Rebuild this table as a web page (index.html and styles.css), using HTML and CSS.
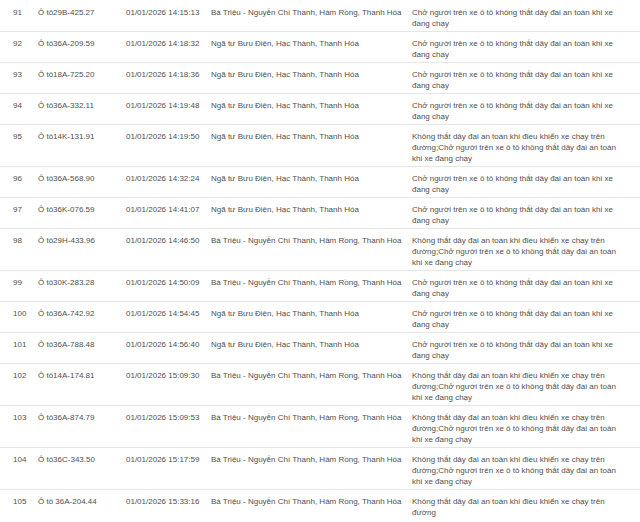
FILE: index.html
```html
<!DOCTYPE html>
<html lang="vi">
<head>
<meta charset="utf-8">
<title>Danh sách vi phạm</title>
<link rel="stylesheet" href="styles.css">
</head>
<body>
<table class="violations">
  <colgroup>
    <col class="c-no"><col class="c-plate"><col class="c-time"><col class="c-place"><col class="c-desc">
  </colgroup>
  <tbody>
    <tr><td>91</td><td>Ô tô29B-425.27</td><td>01/01/2026 14:15:13</td><td>Bà Triệu - Nguyễn Chí Thanh, Hàm Rồng, Thanh Hóa</td><td>Chở người trên xe ô tô không thắt dây đai an toàn khi xe đang chạy</td></tr>
    <tr><td>92</td><td>Ô tô36A-209.59</td><td>01/01/2026 14:18:32</td><td>Ngã tư Bưu Điện, Hạc Thành, Thanh Hóa</td><td>Chở người trên xe ô tô không thắt dây đai an toàn khi xe đang chạy</td></tr>
    <tr><td>93</td><td>Ô tô18A-725.20</td><td>01/01/2026 14:18:36</td><td>Ngã tư Bưu Điện, Hạc Thành, Thanh Hóa</td><td>Chở người trên xe ô tô không thắt dây đai an toàn khi xe đang chạy</td></tr>
    <tr><td>94</td><td>Ô tô36A-332.11</td><td>01/01/2026 14:19:48</td><td>Ngã tư Bưu Điện, Hạc Thành, Thanh Hóa</td><td>Chở người trên xe ô tô không thắt dây đai an toàn khi xe đang chạy</td></tr>
    <tr><td>95</td><td>Ô tô14K-131.91</td><td>01/01/2026 14:19:50</td><td>Ngã tư Bưu Điện, Hạc Thành, Thanh Hóa</td><td>Không thắt dây đai an toàn khi điều khiển xe chạy trên đường;Chở người trên xe ô tô không thắt dây đai an toàn khi xe đang chạy</td></tr>
    <tr><td>96</td><td>Ô tô36A-568.90</td><td>01/01/2026 14:32:24</td><td>Ngã tư Bưu Điện, Hạc Thành, Thanh Hóa</td><td>Chở người trên xe ô tô không thắt dây đai an toàn khi xe đang chạy</td></tr>
    <tr><td>97</td><td>Ô tô36K-076.59</td><td>01/01/2026 14:41:07</td><td>Ngã tư Bưu Điện, Hạc Thành, Thanh Hóa</td><td>Chở người trên xe ô tô không thắt dây đai an toàn khi xe đang chạy</td></tr>
    <tr><td>98</td><td>Ô tô29H-433.96</td><td>01/01/2026 14:46:50</td><td>Bà Triệu - Nguyễn Chí Thanh, Hàm Rồng, Thanh Hóa</td><td>Không thắt dây đai an toàn khi điều khiển xe chạy trên đường;Chở người trên xe ô tô không thắt dây đai an toàn khi xe đang chạy</td></tr>
    <tr><td>99</td><td>Ô tô30K-283.28</td><td>01/01/2026 14:50:09</td><td>Bà Triệu - Nguyễn Chí Thanh, Hàm Rồng, Thanh Hóa</td><td>Chở người trên xe ô tô không thắt dây đai an toàn khi xe đang chạy</td></tr>
    <tr><td>100</td><td>Ô tô36A-742.92</td><td>01/01/2026 14:54:45</td><td>Ngã tư Bưu Điện, Hạc Thành, Thanh Hóa</td><td>Chở người trên xe ô tô không thắt dây đai an toàn khi xe đang chạy</td></tr>
    <tr><td>101</td><td>Ô tô36A-788.48</td><td>01/01/2026 14:56:40</td><td>Ngã tư Bưu Điện, Hạc Thành, Thanh Hóa</td><td>Chở người trên xe ô tô không thắt dây đai an toàn khi xe đang chạy</td></tr>
    <tr><td>102</td><td>Ô tô14A-174.81</td><td>01/01/2026 15:09:30</td><td>Bà Triệu - Nguyễn Chí Thanh, Hàm Rồng, Thanh Hóa</td><td>Không thắt dây đai an toàn khi điều khiển xe chạy trên đường;Chở người trên xe ô tô không thắt dây đai an toàn khi xe đang chạy</td></tr>
    <tr><td>103</td><td>Ô tô36A-874.79</td><td>01/01/2026 15:09:53</td><td>Bà Triệu - Nguyễn Chí Thanh, Hàm Rồng, Thanh Hóa</td><td>Không thắt dây đai an toàn khi điều khiển xe chạy trên đường;Chở người trên xe ô tô không thắt dây đai an toàn khi xe đang chạy</td></tr>
    <tr><td>104</td><td>Ô tô36C-343.50</td><td>01/01/2026 15:17:59</td><td>Bà Triệu - Nguyễn Chí Thanh, Hàm Rồng, Thanh Hóa</td><td>Không thắt dây đai an toàn khi điều khiển xe chạy trên đường;Chở người trên xe ô tô không thắt dây đai an toàn khi xe đang chạy</td></tr>
    <tr><td>105</td><td>Ô tô 36A-204.44</td><td>01/01/2026 15:33:16</td><td>Bà Triệu - Nguyễn Chí Thanh, Hàm Rồng, Thanh Hóa</td><td>Không thắt dây đai an toàn khi điều khiển xe chạy trên đường</td></tr>
  </tbody>
</table>
</body>
</html>
```

FILE: styles.css
```css
html, body {
  margin: 0;
  padding: 0;
  background: #ffffff;
}

body {
  font-family: "Liberation Sans", Arial, sans-serif;
  font-size: 8px;
  color: #505050;
}

.violations {
  width: 640px;
  border-collapse: collapse;
  table-layout: fixed;
}

.c-no { width: 32px; }
.c-plate { width: 88px; }
.c-time { width: 85px; }
.c-place { width: 201px; }
.c-desc { width: 234px; }

.violations td {
  vertical-align: top;
  padding: 6px 6px 2px 6px;
  line-height: 11px;
  border-top: 1px solid #e6e6e6;
  white-space: nowrap;
}

.violations tr:first-child td {
  border-top-color: transparent;
}

.violations td:first-child {
  padding-left: 13px;
}

.violations td:last-child {
  white-space: normal;
  padding-right: 16px;
}
```
